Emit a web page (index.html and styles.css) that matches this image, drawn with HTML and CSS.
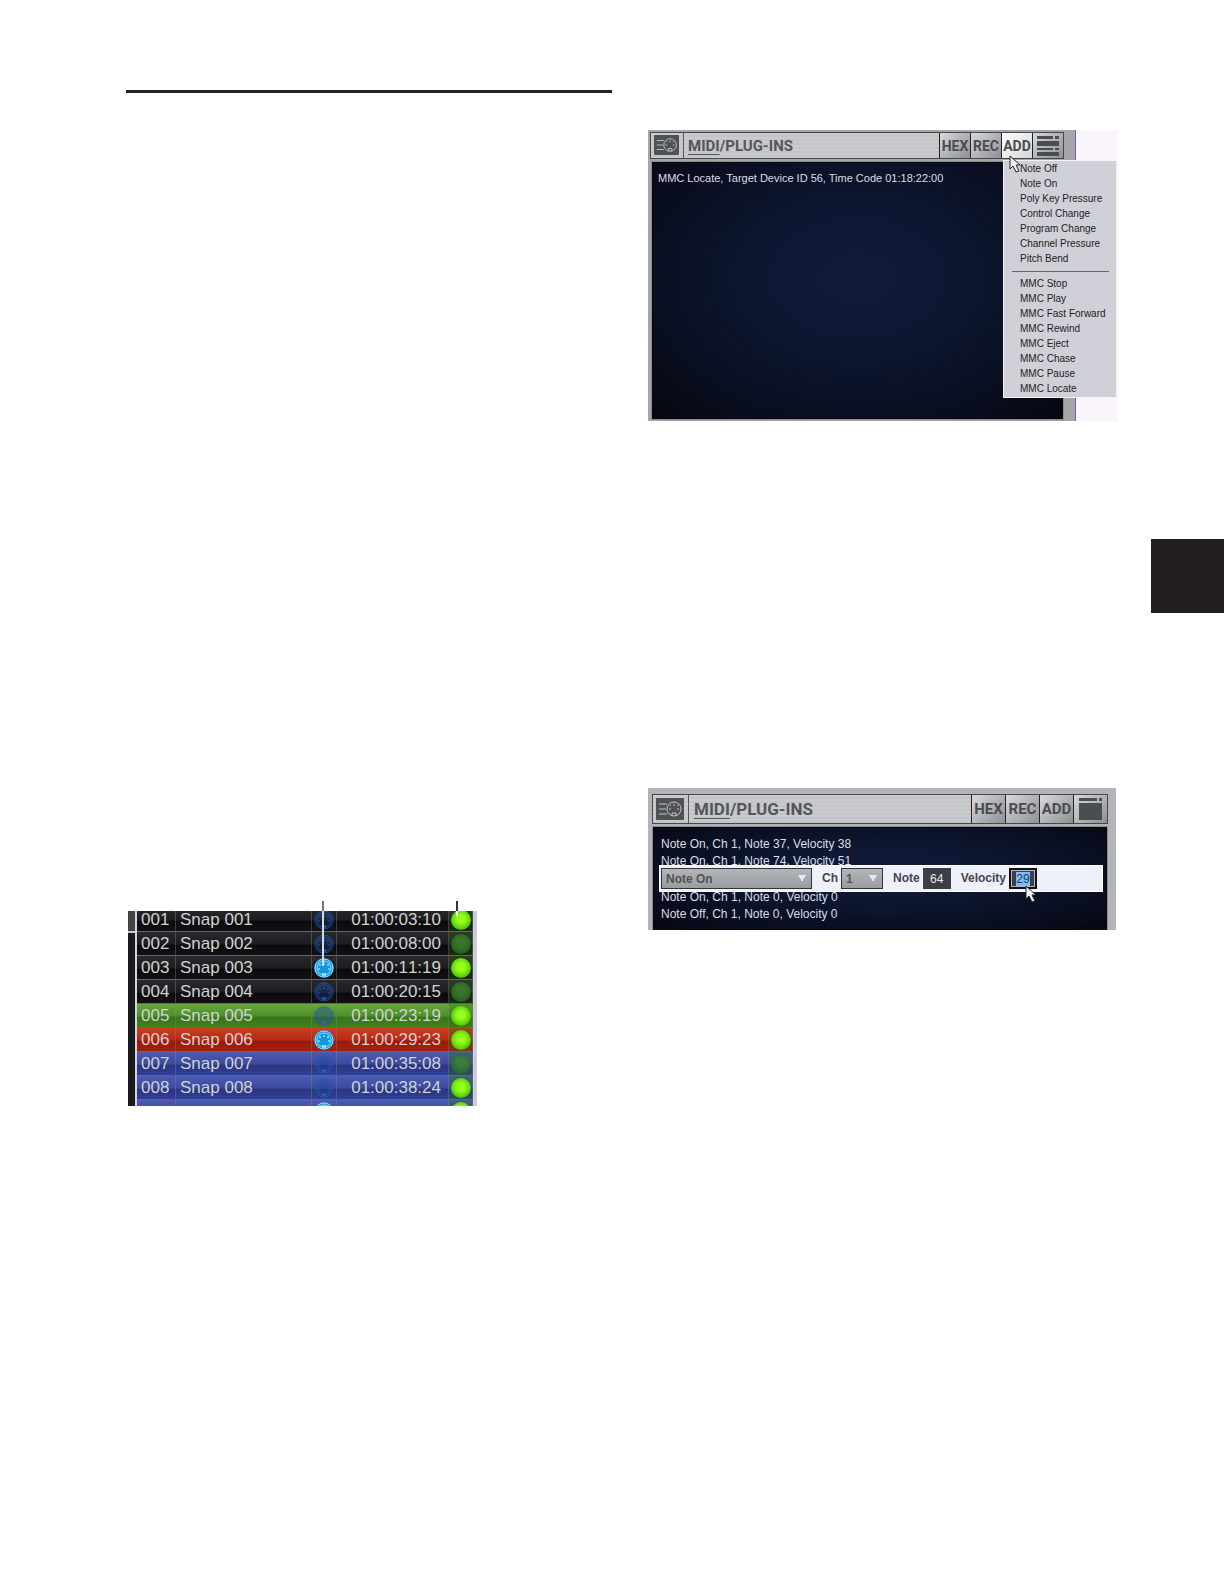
FILE: index.html
```html
<!DOCTYPE html>
<html lang="en">
<head>
  <meta charset="UTF-8" />
  <meta name="viewport" content="width=device-width, initial-scale=1.0" />
  <title>MIDI/PLUG-INS</title>
  <link rel="stylesheet" href="styles.css">
</head>
<body>
  <svg class="defs" aria-hidden="true">
    <symbol id="midi-icon" viewBox="0 0 28 22">
      <path d="M3 6h8M3 11h7M3 16h8" stroke="#c3c6cc" stroke-width="1" fill="none" />
      <circle cx="18" cy="11" r="7" stroke="#c3c6cc" stroke-width="1" fill="none" />
      <path d="M13 11h2M14 7l1 1M18 6v2M22 7l-1 1M21 11h2M16 18v-3h4v3" stroke="#c3c6cc" stroke-width="1" fill="none" />
    </symbol>
    <symbol id="din" viewBox="0 0 20 20">
      <circle cx="10" cy="10" r="9" fill="none" stroke="currentColor" stroke-width="1" />
      <circle cx="10" cy="10" r="7" fill="none" stroke="currentColor" stroke-width="1" />
      <path d="M8 18v-3h4v3z" fill="currentColor" />
      <g fill="currentColor">
        <circle cx="5" cy="11" r="1" /><circle cx="6" cy="7" r="1" /><circle cx="10" cy="6" r="1" />
        <circle cx="14" cy="7" r="1" /><circle cx="15" cy="11" r="1" />
      </g>
    </symbol>
    <symbol id="pointer" viewBox="0 0 12 18">
      <path d="M1 1v13l3-3 3 6 3-1-3-6h4z" fill="#f4f4f8" stroke="#222" stroke-width="1" />
    </symbol>
  </svg>

  <main class="page">
    <section class="column">
      <hr class="rule">

      <div class="snapshots">
        <span class="leader leader-midi"></span>
        <span class="leader leader-led"></span>
        <div class="snap-frame">
          <div class="snap-side"></div>
          <table class="snap-table">
            <colgroup>
              <col class="col-num"><col><col class="col-midi"><col class="col-time"><col class="col-led">
            </colgroup>
            <tbody>
              <tr>
                <td>001</td><td>Snap 001</td>
                <td><svg class="din"><use href="#din" /></svg></td>
                <td>01:00:03:10</td><td><span class="led on"></span></td>
              </tr>
              <tr>
                <td>002</td><td>Snap 002</td>
                <td><svg class="din"><use href="#din" /></svg></td>
                <td>01:00:08:00</td><td><span class="led"></span></td>
              </tr>
              <tr>
                <td>003</td><td>Snap 003</td>
                <td><svg class="din on"><use href="#din" /></svg></td>
                <td>01:00:11:19</td><td><span class="led on"></span></td>
              </tr>
              <tr>
                <td>004</td><td>Snap 004</td>
                <td><svg class="din"><use href="#din" /></svg></td>
                <td>01:00:20:15</td><td><span class="led"></span></td>
              </tr>
              <tr class="green">
                <td>005</td><td>Snap 005</td>
                <td><svg class="din"><use href="#din" /></svg></td>
                <td>01:00:23:19</td><td><span class="led on"></span></td>
              </tr>
              <tr class="red">
                <td>006</td><td>Snap 006</td>
                <td><svg class="din on"><use href="#din" /></svg></td>
                <td>01:00:29:23</td><td><span class="led on"></span></td>
              </tr>
              <tr class="blue">
                <td>007</td><td>Snap 007</td>
                <td><svg class="din"><use href="#din" /></svg></td>
                <td>01:00:35:08</td><td><span class="led"></span></td>
              </tr>
              <tr class="blue">
                <td>008</td><td>Snap 008</td>
                <td><svg class="din"><use href="#din" /></svg></td>
                <td>01:00:38:24</td><td><span class="led on"></span></td>
              </tr>
              <tr class="blue">
                <td></td><td></td>
                <td><svg class="din on"><use href="#din" /></svg></td>
                <td></td><td><span class="led on"></span></td>
              </tr>
            </tbody>
          </table>
        </div>
      </div>
    </section>

    <section class="column">
      <div class="add-figure">
        <div class="panel">
          <div class="panel-header">
            <svg class="panel-icon"><use href="#midi-icon" /></svg>
            <h2><u>MIDI</u>/PLUG-INS</h2>
            <button type="button">HEX</button>
            <button type="button">REC</button>
            <button type="button" class="active">ADD</button>
            <button type="button" aria-label="List view">
              <svg class="view-icon" viewBox="0 0 22 20">
                <path d="M0 0h16v3H0zM18 0h4v3h-4zM0 5h22v5H0zM0 12h16v2H0zM18 12h4v2h-4zM0 16h22v4H0z" fill="#4a4d52" />
              </svg>
            </button>
          </div>
          <ul class="messages">
            <li>MMC Locate, Target Device ID 56, Time Code 01:18:22:00</li>
          </ul>
        </div>

        <div class="menu">
          <button type="button">Note Off</button>
          <button type="button">Note On</button>
          <button type="button">Poly Key Pressure</button>
          <button type="button">Control Change</button>
          <button type="button">Program Change</button>
          <button type="button">Channel Pressure</button>
          <button type="button">Pitch Bend</button>
          <hr>
          <button type="button">MMC Stop</button>
          <button type="button">MMC Play</button>
          <button type="button">MMC Fast Forward</button>
          <button type="button">MMC Rewind</button>
          <button type="button">MMC Eject</button>
          <button type="button">MMC Chase</button>
          <button type="button">MMC Pause</button>
          <button type="button">MMC Locate</button>
        </div>
        <svg class="pointer"><use href="#pointer" /></svg>
      </div>

      <div class="panel panel-edit">
        <div class="panel-header">
          <svg class="panel-icon"><use href="#midi-icon" /></svg>
          <h2><u>MIDI</u>/PLUG-INS</h2>
          <button type="button">HEX</button>
          <button type="button">REC</button>
          <button type="button">ADD</button>
          <button type="button" aria-label="Single view">
            <svg class="view-icon" viewBox="0 0 24 22">
              <path d="M0 0h18v3H0zM20 0h3v3h-3zM0 5h23v17H0z" fill="#4a4d52" />
            </svg>
          </button>
        </div>
        <ul class="messages">
          <li>Note On, Ch 1, Note 37, Velocity 38</li>
          <li>Note On, Ch 1, Note 74, Velocity 51</li>
          <li class="editor">
            <select class="type" aria-label="Message type">
              <option>Note On</option>
              <option>Note Off</option>
            </select>
            <label for="channel">Ch</label>
            <select class="channel" id="channel">
              <option>1</option>
              <option>2</option>
            </select>
            <label for="note">Note</label>
            <input type="text" id="note" value="64">
            <label for="velocity">Velocity</label>
            <span class="focused">
              <input type="text" id="velocity" value="29">
              <svg class="pointer"><use href="#pointer" /></svg>
            </span>
          </li>
          <li>Note On, Ch 1, Note 0, Velocity 0</li>
          <li>Note Off, Ch 1, Note 0, Velocity 0</li>
        </ul>
      </div>
    </section>

    <aside class="thumb"></aside>
  </main>
</body>
</html>
```
FILE: styles.css
```css
* {
  box-sizing: border-box;
}
body {
  margin: 0;
  background-color: #fff;
  font-family: "Liberation Sans", Arial, sans-serif;
}
ul, h2, hr {
  margin: 0;
  padding: 0;
}
button, select, input {
  font-family: inherit;
  margin: 0;
}
.defs {
  display: none;
}

.page {
  display: grid;
  grid-template-columns: 486fr 36px 470fr 33px 73px;
  padding: 90px 0 80px 126px;
}
.column:nth-child(2) {
  grid-column: 3;
}
.thumb {
  grid-column: 5;
  height: 74px;
  margin-top: 449px;
  background-color: #231f20;
}
.rule {
  height: 3px;
  border: none;
  background-color: #212322;
}

/* snapshot list */
.snapshots {
  position: relative;
  width: 349px;
  margin: 808px 0 0 2px;
  padding-top: 10px;
}
.leader {
  position: absolute;
  top: 0;
  z-index: 1;
}
.leader-midi {
  left: 194px;
  width: 2px;
  height: 65px;
  background: linear-gradient(#777 10px, #d8d8d8 10px);
}
.leader-led {
  left: 328px;
  width: 2px;
  height: 15px;
  background: linear-gradient(#333 10px, #fff 10px);
}
.snap-frame {
  display: flex;
  height: 195px;
  overflow: hidden;
  border-right: 4px solid #cdcadb;
}
.snap-side {
  width: 9px;
  border-right: 2px solid #d5d5dc;
  background: linear-gradient(#444 20px, #ccc 20px, #ccc 22px, #191b1e 22px);
}
.snap-table {
  flex: 1;
  height: 216px;
  margin-top: -3px;
  table-layout: fixed;
  border-collapse: separate;
  border-spacing: 0;
  color: #d2d2d2;
  font-size: 17px;
  font-kerning: none;
  line-height: 23px;
}
.col-num {
  width: 39px;
}
.col-midi {
  width: 25px;
}
.col-time {
  width: 112px;
}
.col-led {
  width: 24px;
}
.snap-table tr {
  height: 24px;
  background: linear-gradient(#29292d, #1d1d20 50%, #0b0b0d 55%, #111113);
}
.snap-table td {
  height: 24px;
  padding: 0 0 0 4px;
  border-right: 1px solid rgba(130, 130, 140, 0.4);
  border-bottom: 1px solid #66666a;
  white-space: nowrap;
}
.snap-table td:nth-child(3), .snap-table td:nth-child(5) {
  padding: 0 0 0 2px;
}
.snap-table td:nth-child(4) {
  padding: 0 7px 0 0;
  text-align: right;
}
.snap-table td:nth-child(5) {
  background-color: rgba(40, 110, 10, 0.3);
}
.snap-table .green {
  background: linear-gradient(#66a83f, #4e8f2a 50%, #39751a 55%, #42801f);
}
.snap-table .red {
  background: linear-gradient(#cc3d22, #b52a14 50%, #9c1a09 55%, #a3200d);
}
.snap-table .blue {
  background: linear-gradient(#4c5ab0, #3c4aa0 50%, #2a3583 55%, #333f90);
}
.din {
  display: block;
  width: 20px;
  height: 20px;
  border-radius: 50%;
  background-color: rgba(25, 70, 150, 0.35);
  color: rgba(45, 105, 200, 0.5);
}
.din.on {
  background-color: #1595e0;
  color: #8fdcff;
}
.led {
  display: block;
  width: 20px;
  height: 20px;
  border-radius: 50%;
  background: radial-gradient(circle at 50% 45%, rgba(60, 135, 50, 0.8) 30%, rgba(35, 85, 30, 0.8));
}
.led.on {
  background: radial-gradient(circle at 50% 45%, #96ff1e 25%, #5fd608 60%, #357f05);
}

/* MIDI panels */
.add-figure {
  position: relative;
  display: flex;
  height: 291px;
  margin-top: 40px;
  padding-right: 42px;
  background-color: #f9f5fb;
}
.panel {
  flex: 1;
  padding: 2px 11px 0 2px;
  border-right: 1px solid #6a5fc0;
  background-color: #a5a6aa;
}
.panel-header {
  display: flex;
  height: 27px;
  border: 1px solid #45474b;
  background: repeating-linear-gradient(#c9cbce 0 2px, #c2c4c8 2px 4px);
}
.panel-icon {
  flex: none;
  width: 25px;
  height: 20px;
  margin: 2px 4px 0 3px;
  border-radius: 1px;
  background-color: #4e5156;
}
.panel-header h2 {
  flex: 1;
  padding-left: 4px;
  border-left: 1px solid #55575b;
  color: #54565b;
  font: bold 15px/26px Roboto, "Liberation Sans", sans-serif;
}
.panel-header u {
  text-decoration-thickness: 1px;
  text-underline-offset: 3px;
}
.panel-header button {
  display: flex;
  align-items: center;
  justify-content: center;
  width: 31px;
  padding: 0;
  border: none;
  border-left: 1px solid #222;
  background: linear-gradient(135deg, #d8d9dc, #8f9094);
  color: #4a4c50;
  font: bold 14px Roboto, "Liberation Sans", sans-serif;
}
.panel-header .active {
  background: linear-gradient(135deg, #fff, #d5d6d8);
}
.view-icon {
  width: 22px;
  height: 20px;
}
.messages {
  height: 259px;
  margin: 2px 0 0 1px;
  padding: 8px 0 0 6px;
  border: 1px solid #8b8d90;
  box-shadow: inset 0 0 0 1px #08090c;
  background: radial-gradient(ellipse at 50% 45%, #111a3a, #0d1630 40%, #070a16 90%, #04060e);
  color: #dcdde6;
  font-size: 11px;
  line-height: 17px;
  list-style: none;
}

/* ADD menu */
.menu {
  position: absolute;
  top: 30px;
  right: 1px;
  width: 114px;
  padding: 0 1px 1px 16px;
  border: 1px solid #f4f4f6;
  background-color: #d0d1d8;
}
.menu button {
  display: block;
  width: 100%;
  padding: 0;
  border: none;
  background: none;
  color: #222;
  font-size: 10px;
  line-height: 15px;
  text-align: left;
  white-space: nowrap;
}
.menu hr {
  margin: 5px 6px 4px -8px;
  border: none;
  border-top: 1px solid #666;
}
.pointer {
  position: absolute;
  top: 25px;
  left: 361px;
  width: 12px;
  height: 18px;
}

/* message editor */
.panel-edit {
  height: 142px;
  margin: 367px 2px 0 0;
  padding: 6px 8px 0 4px;
  border: none;
  background-color: #b3b4b9;
}
.panel-edit .panel-header {
  height: 30px;
}
.panel-edit .panel-icon {
  width: 28px;
  height: 22px;
  margin-top: 3px;
}
.panel-edit h2 {
  padding-left: 5px;
  font-size: 17px;
  line-height: 29px;
}
.panel-edit .panel-header button {
  width: 34px;
  font-size: 15px;
}
.panel-edit .view-icon {
  width: 24px;
  height: 22px;
}
.panel-edit .messages {
  height: 104px;
  margin-left: 0;
  padding: 9px 4px 0 8px;
  border-bottom: none;
  font-size: 12px;
}
.editor {
  position: relative;
  display: flex;
  align-items: center;
  height: 27px;
  margin: -5px 0 -3px -2px;
  padding: 0 1px;
  border: 1px solid #fff;
  background-color: #eef0fa;
  color: #44464c;
  font-weight: bold;
}
.editor select {
  height: 21px;
  padding: 0 4px;
  appearance: none;
  border: 1px solid #333;
  border-radius: 0;
  color: #505257;
  font-size: 12px;
  font-weight: bold;
}
.editor .type, .editor .channel {
  background: linear-gradient(to bottom right, #e8e8ec 50%, transparent 50%) right 5px center / 4px 7px no-repeat,
    linear-gradient(to bottom left, #e8e8ec 50%, transparent 50%) right 9px center / 4px 7px no-repeat,
    linear-gradient(#b4b5b9, #9b9ca0);
}
.editor .type {
  width: 151px;
}
.editor .channel {
  width: 42px;
}
.editor label {
  margin: 0 3px 0 10px;
}
.editor input {
  width: 28px;
  height: 21px;
  padding: 0;
  border: none;
  background-color: #3c3e43;
  color: #e8e8ee;
  font-size: 12px;
  text-align: center;
}
.focused {
  position: relative;
  display: flex;
}
.editor .focused input {
  border: 2px solid #111;
  background: linear-gradient(#7fbcf5, #7fbcf5) center / 14px 14px no-repeat, #3c3e43;
  box-shadow: inset 0 0 0 1px #b5b6bb;
  color: #1e3a66;
}
.focused .pointer {
  top: 17px;
  left: 16px;
}
```
